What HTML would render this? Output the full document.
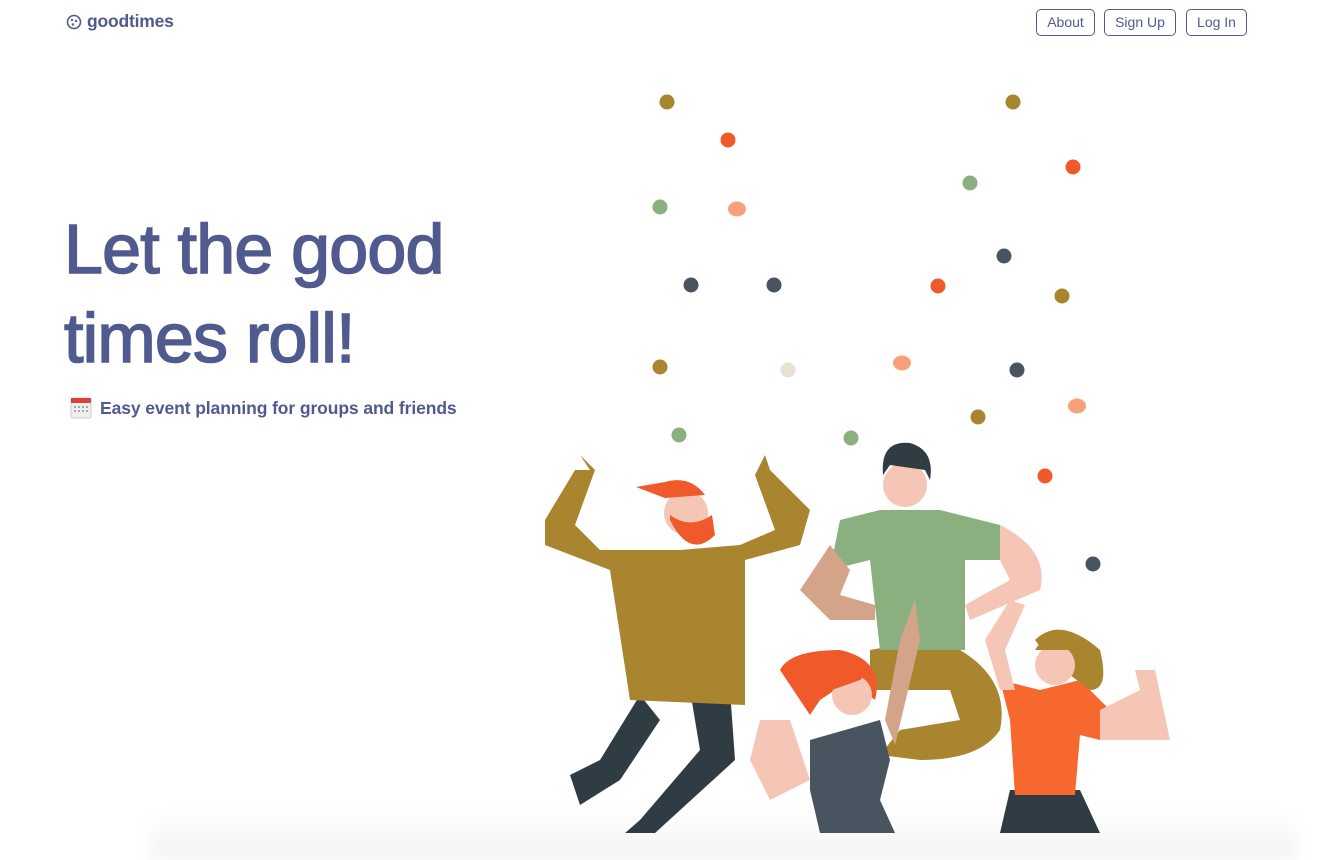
<!DOCTYPE html>
<html><head><meta charset="utf-8"><style>
html,body{margin:0;padding:0;background:#fff;width:1327px;height:833px;overflow:hidden;font-family:"Liberation Sans",sans-serif;color:#515a8f}
.logo{position:absolute;left:66px;top:11px;font-weight:bold;font-size:17.5px;display:flex;align-items:center;gap:5px;letter-spacing:-0.2px}
.btn{position:absolute;top:9px;height:25px;border:1px solid #515a8f;border-radius:5px;font-size:14px;line-height:25px;text-align:center;box-sizing:content-box}
h1{position:absolute;left:64px;top:205px;margin:0;font-size:70px;font-weight:normal;line-height:89px;letter-spacing:-0.8px;-webkit-text-stroke:1.6px #515a8f}
.sub{position:absolute;left:70px;top:395px;font-size:17.5px;font-weight:bold;letter-spacing:-0.1px}
.shadow{position:absolute;left:150px;right:30px;top:810px;height:50px;background:linear-gradient(#fff0,#f2f2f2);filter:blur(8px)}
</style></head><body>
<div class="logo"><svg width="16" height="16" viewBox="0 0 16 16"><circle cx="8" cy="8" r="6.5" fill="none" stroke="#515a8f" stroke-width="1.6"/><circle cx="6" cy="6" r="1.2" fill="#515a8f"/><circle cx="10" cy="7" r="1.2" fill="#515a8f"/><circle cx="7" cy="10.5" r="1.2" fill="#515a8f"/></svg>goodtimes</div>
<div class="btn" style="left:1036px;width:57px">About</div>
<div class="btn" style="left:1104px;width:70px">Sign Up</div>
<div class="btn" style="left:1186px;width:59px">Log In</div>
<h1>Let the good<br>times roll!</h1>
<div class="sub"><svg width="22" height="24" viewBox="0 0 22 24" style="vertical-align:-5px;margin-right:8px"><rect x="1" y="3" width="20" height="20" rx="2" fill="#eee" stroke="#ccc"/><rect x="1" y="3" width="20" height="5" fill="#d9413a"/><g fill="#aaa"><rect x="4" y="11" width="2" height="2"/><rect x="8" y="11" width="2" height="2"/><rect x="12" y="11" width="2" height="2"/><rect x="16" y="11" width="2" height="2"/><rect x="4" y="15" width="2" height="2"/><rect x="8" y="15" width="2" height="2"/><rect x="12" y="15" width="2" height="2"/><rect x="16" y="15" width="2" height="2"/></g></svg>Easy event planning for groups and friends</div>
<div class="shadow"></div>
<svg style="position:absolute;left:0;top:0" width="1327" height="833">
<g>
<circle cx="667" cy="102" r="7.5" fill="#a8852e"/><circle cx="1013" cy="102" r="7.5" fill="#a8852e"/>
<circle cx="728" cy="140" r="7.5" fill="#f05a2a"/><circle cx="1073" cy="167" r="7.5" fill="#f05a2a"/>
<circle cx="970" cy="183" r="7.5" fill="#8bb07f"/><circle cx="660" cy="207" r="7.5" fill="#8bb07f"/>
<ellipse cx="737" cy="209" rx="9" ry="7.5" fill="#f7a07a"/><circle cx="1004" cy="256" r="7.5" fill="#48545f"/>
<circle cx="691" cy="285" r="7.5" fill="#48545f"/><circle cx="774" cy="285" r="7.5" fill="#48545f"/>
<circle cx="938" cy="286" r="7.5" fill="#f05a2a"/><circle cx="1062" cy="296" r="7.5" fill="#a8852e"/>
<circle cx="660" cy="367" r="7.5" fill="#a8852e"/><circle cx="788" cy="370" r="7.5" fill="#e8e2d2"/>
<ellipse cx="902" cy="363" rx="9" ry="7.5" fill="#f7a07a"/><circle cx="1017" cy="370" r="7.5" fill="#48545f"/>
<ellipse cx="1077" cy="406" rx="9" ry="7.5" fill="#f7a07a"/><circle cx="978" cy="417" r="7.5" fill="#a8852e"/>
<circle cx="679" cy="435" r="7.5" fill="#8bb07f"/><circle cx="851" cy="438" r="7.5" fill="#8bb07f"/>
<circle cx="1045" cy="476" r="7.5" fill="#f05a2a"/><circle cx="1093" cy="564" r="7.5" fill="#48545f"/>
</g>
<path d="M640 695 L600 760 L570 775 L580 805 L620 780 L660 720Z" fill="#303c44"/>
<path d="M690 690 L700 750 L640 820 L625 833 L655 833 L735 760 L730 690Z" fill="#303c44"/>
<path d="M580 455 L590 470 L560 500 L545 540 L610 570 L630 700 L745 705 L745 560 L800 545 L810 510 L770 470 L765 455 L755 475 L775 530 L740 545 L680 550 L600 550 L575 525 L595 470Z" fill="#a8852e"/>
<path d="M545 520 L575 470 L590 470 L570 530 L610 560 L610 570 L545 545Z" fill="#a8852e"/>
<circle cx="686" cy="513" r="22" fill="#f5c6b5"/>
<path d="M670 520 Q690 560 715 535 L712 515 Q690 530 670 515Z" fill="#f05a2a"/>
<path d="M636 487 L665 482 Q690 475 705 495 L665 498Z" fill="#f05a2a"/>
<path d="M870 650 Q920 640 960 650 Q1010 680 1000 730 Q980 760 920 760 L880 755 L900 730 L960 720 L950 690 L870 690Z" fill="#a8852e"/>
<path d="M840 520 L830 570 L870 560 L880 650 L965 650 L965 560 L1000 560 L1000 525 L940 510 L880 510Z" fill="#8bb07f"/>
<path d="M830 545 L800 590 L830 620 L875 620 L875 605 L840 595 L850 570Z" fill="#d4a48a"/>
<path d="M1000 525 Q1050 550 1040 590 L970 620 L965 605 L1010 580 L1000 560Z" fill="#f5c6b5"/>
<circle cx="905" cy="485" r="22" fill="#f5c6b5"/>
<path d="M883 475 Q880 440 910 443 Q935 450 930 480 L925 470 L890 465Z" fill="#303c44"/>
<path d="M790 720 L760 720 L750 760 L770 800 L810 780 L800 750Z" fill="#f5c6b5"/>
<path d="M810 740 L880 720 L890 760 L880 800 L895 833 L820 833 L810 790Z" fill="#48545f"/>
<path d="M885 720 L900 640 L915 600 L920 640 L895 745Z" fill="#d4a48a"/>
<path d="M780 670 Q790 650 840 650 Q885 660 875 700 L850 680 L820 700 L810 715Z" fill="#f05a2a"/>
<circle cx="852" cy="695" r="20" fill="#f5c6b5"/>
<path d="M832 690 Q840 660 870 672 L860 680Z" fill="#f05a2a"/>
<path d="M1010 790 L1080 790 L1100 833 L1000 833Z" fill="#303c44"/>
<path d="M1000 680 L1040 690 L1080 680 L1110 710 L1100 740 L1080 735 L1075 795 L1015 795 L1010 720Z" fill="#f6682e"/>
<path d="M1100 710 L1140 690 L1135 670 L1155 670 L1170 740 L1100 740Z" fill="#f5c6b5"/>
<path d="M1000 690 L985 640 L1010 600 L1025 605 L1005 650 L1015 690Z" fill="#f5c6b5"/>
<path d="M1035 640 Q1060 615 1100 650 Q1110 690 1090 690 L1050 660Z" fill="#a8852e"/>
<circle cx="1055" cy="665" r="20" fill="#f5c6b5"/>
<path d="M1035 650 Q1050 625 1080 650 L1060 650Z" fill="#a8852e"/>
</svg>
</body></html>
